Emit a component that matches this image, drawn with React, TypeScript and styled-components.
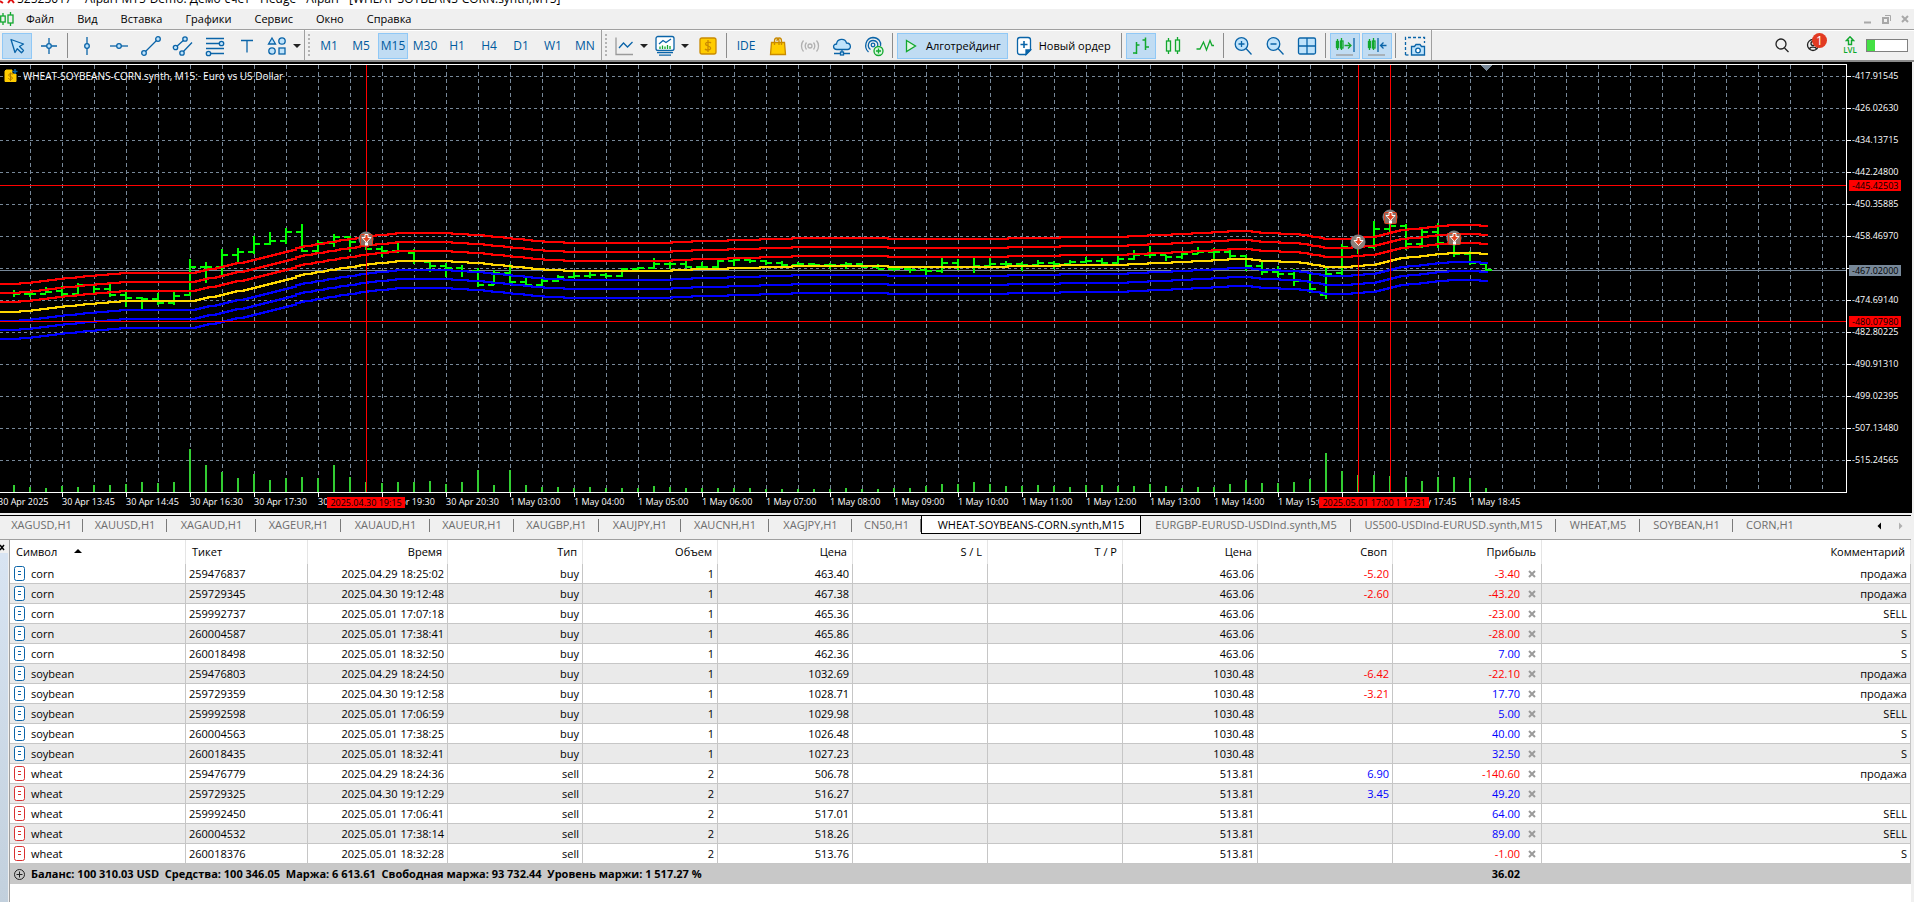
import React from "react";
import styled, { createGlobalStyle, css } from "styled-components";

const UI_FONT = `"Open Sans", "Noto Sans", sans-serif`;

const GlobalStyle = createGlobalStyle`
  * { box-sizing: border-box; }
  html, body { margin: 0; padding: 0; }
  body { background: #fff; color: #000; font: 11px/16px ${UI_FONT}; overflow-x: hidden; }
  button { font: inherit; color: inherit; border: 0; padding: 0; margin: 0; background: none; cursor: default; }
  ul { list-style: none; margin: 0; padding: 0; }
  svg { display: block; flex: none; }
`;

const Window = styled.div`
  min-height: 100vh;
  display: flex;
  flex-direction: column;
  background: #f0f0f0;
`;

/* ---------- title and menu ---------- */

const TitleBar = styled.header`
  height: 9px;
  background: #fff;
  display: flex;
  align-items: flex-end;
  justify-content: space-between;
  overflow: hidden;
`;
const TitleText = styled.div`
  display: flex;
  align-items: flex-end;
  font-size: 12px;
  line-height: 16px;
  white-space: pre;
  padding-bottom: 2px;
`;
const MenuBar = styled.nav`
  height: 20px;
  display: flex;
  align-items: center;
  justify-content: space-between;
  padding-right: 5px;
`;
const MenuList = styled.ul`
  display: flex;
  align-items: center;
  gap: 1px;
`;
const MenuButton = styled.button`
  height: 20px;
  padding: 0 11px;
`;
const MdiButtons = styled.div`
  display: flex;
  gap: 10px;
  color: #a8a8a8;
`;

/* ---------- toolbar ---------- */

const Toolbar = styled.div`
  height: 33px;
  display: flex;
  align-items: stretch;
  justify-content: space-between;
  border-top: 1px solid #a0a0a0;
  border-bottom: 2px solid #8a8a8a;
  box-shadow: inset 0 1px 0 #fff;
`;
const Bands = styled.div`
  display: flex;
`;
const Band = styled.div`
  display: flex;
  align-items: center;
  gap: 2px;
  padding: 1px 1px 0 2px;
  border-right: 1px solid #a0a0a0;
`;
const Grip = styled.span`
  width: 4px;
  height: 24px;
  margin-right: 1px;
  background: radial-gradient(circle at 1px 1px, #b4b4b4 1px, transparent 1px) 1px 0 / 4px 4px repeat-y;
`;
const Divider = styled.span`
  width: 4px;
  height: 25px;
  background: linear-gradient(#8c8c8c, #8c8c8c) 1px 0 / 1px 100% no-repeat;
`;
const ToolButton = styled.button<{ $on?: boolean; $wide?: number }>`
  width: ${(p) => p.$wide ?? 30}px;
  height: 26px;
  display: flex;
  align-items: center;
  justify-content: center;
  color: #005a9e;
  font-size: 12px;
  ${(p) =>
    p.$on &&
    css`
      background: #c0dcf3;
      outline: 1px solid #90c8f6;
      outline-offset: -1px;
    `}
`;
const TextTool = styled(ToolButton)`
  width: auto;
  color: #000;
  gap: 3px;
  padding: 0 7px 0 2px;
  font-size: 11px;
`;
const Caret = styled.span`
  margin: 0 2px 0 4px;
  border: 4px solid transparent;
  border-top: 4px solid #222;
  border-bottom: 0;
`;
const StatusArea = styled.div`
  display: flex;
  align-items: center;
  padding-right: 6px;
`;
const StatusButton = styled.button`
  width: 32px;
  height: 26px;
  display: flex;
  align-items: center;
  justify-content: center;
  position: relative;
`;
const AlertBadge = styled.span`
  position: absolute;
  right: 3px;
  top: 1px;
  width: 15px;
  height: 15px;
  border-radius: 8px;
  background: #e23b22;
  color: #fff;
  font-size: 12px;
  line-height: 15px;
  text-align: center;
`;
const Level = styled.span`
  width: 32px;
  margin-left: 4px;
  display: flex;
  flex-direction: column;
  align-items: center;
  color: #0aa82c;
  font-size: 8px;
  font-weight: 600;
  line-height: 8px;
`;
const Gauge = styled.span`
  width: 42px;
  height: 13px;
  background: #fff;
  border: 1px solid #808080;
  display: flex;
`;
const GaugeFill = styled.span`
  width: 8px;
  background: #44e044;
`;

/* ---------- chart ---------- */

const ChartFrame = styled.section`
  background: #000;
  margin-right: 2px;
  padding-top: 2px;
  display: flex;
  color: #fff;
  font-size: 9px;
  line-height: 12px;
`;
const PlotColumn = styled.div`
  flex: 1;
  min-width: 0;
`;
const Plot = styled.div`
  position: relative;
  height: 429px;
  border: 1px solid #fff;
  border-left: 0;
  overflow: hidden;
`;
const PlotSvg = styled.svg`
  width: 100%;
  height: 427px;
`;
const PlotTitle = styled.div`
  position: absolute;
  left: 4px;
  top: 3px;
  display: flex;
  align-items: center;
  gap: 5px;
  white-space: pre;
  font-size: 10px;
  line-height: 16px;
`;
const TimeAxis = styled.div`
  position: relative;
  height: 20px;
  display: flex;
  overflow: hidden;
`;
const TimeLabel = styled.span`
  flex: none;
  width: 64px;
  height: 18px;
  padding-top: 3px;
  white-space: nowrap;
  background: linear-gradient(#fff, #fff) 0 0 / 1px 4px no-repeat;
  &:first-child { margin-left: -2px; background: none; }
`;
const TimeTag = styled.span<{ $x: number }>`
  position: absolute;
  left: ${(p) => p.$x}px;
  top: 4px;
  width: 78px;
  height: 11px;
  line-height: 11px;
  background: #f00;
  color: #000;
  text-align: center;
  white-space: nowrap;
`;
const PriceAxis = styled.div`
  position: relative;
  width: 65px;
  padding-top: 6px;
`;
const PriceLabel = styled.div`
  height: 32px;
  padding-left: 5px;
  background: linear-gradient(#fff, #fff) 0 6px / 4px 1px no-repeat;
`;
const PriceTag = styled.span<{ $y: number; $color: string }>`
  position: absolute;
  left: 2px;
  top: ${(p) => p.$y}px;
  width: 52px;
  height: 11px;
  padding-left: 3px;
  line-height: 11px;
  background: ${(p) => p.$color};
  color: #000;
`;

/* ---------- chart tabs ---------- */

const TabStrip = styled.div`
  margin-top: 2px;
  height: 25px;
  border-top: 1px solid #000;
  border-bottom: 1px solid #a0a0a0;
  display: flex;
  align-items: flex-start;
  justify-content: space-between;
  padding-right: 8px;
  margin-right: 3px;
`;
const TabList = styled.div`
  display: flex;
`;
const Tab = styled.button<{ $active?: boolean; $w: number }>`
  width: ${(p) => p.$w}px;
  height: 18px;
  color: #6d6d6d;
  white-space: nowrap;
  background: linear-gradient(#7a7a7a, #7a7a7a) 100% 3px / 1px 13px no-repeat;
  &:last-child { background: none; }
  ${(p) =>
    p.$active &&
    css`
      background: #fff;
      color: #000;
      border: 1px solid #000;
      border-top: 0;
    `}
`;
const TabArrows = styled.div`
  display: flex;
  gap: 16px;
  padding-top: 6px;
`;

/* ---------- trade table ---------- */

const Terminal = styled.section`
  flex: 1;
  display: flex;
  margin-right: 3px;
`;
const SideRail = styled.div`
  width: 9px;
  background: linear-gradient(#d9e5f3, #c2d0dd);
  border-right: 1px solid #f0f0f0;
`;
const CloseRail = styled.button`
  display: block;
  width: 8px;
  height: 13px;
  background: #f0f0f0;
`;
const TableArea = styled.div`
  flex: 1;
  background: #fff;
  border-left: 1px solid #a0a0a0;
`;
const TradeTable = styled.table`
  width: 100%;
  table-layout: fixed;
  border-collapse: separate;
  border-spacing: 0;
`;
const HeadCell = styled.th<{ $left?: boolean }>`
  height: 24px;
  padding: 0 5px 0 6px;
  font-weight: 400;
  text-align: ${(p) => (p.$left ? "left" : "right")};
  border-right: 1px solid #e5e5e5;
  white-space: pre;
`;
const SortMark = styled.span`
  display: inline-block;
  margin-left: 17px;
  vertical-align: 3px;
  border: 4px solid transparent;
  border-bottom: 4px solid #000;
  border-top: 0;
`;
const Row = styled.tr`
  background: #fff;
  &:nth-child(even) { background: #eaeaea; }
`;
const Cell = styled.td<{ $left?: boolean; $tone?: "loss" | "gain" }>`
  height: 20px;
  padding: 0 3px;
  line-height: 16px;
  text-align: ${(p) => (p.$left ? "left" : "right")};
  color: ${(p) => (p.$tone === "loss" ? "#f00" : p.$tone === "gain" ? "#00f" : "#000")};
  border-right: 1px solid #c6c6c6;
  border-bottom: 1px solid #c6c6c6;
  white-space: nowrap;
`;
const SymbolBox = styled.span`
  display: flex;
  align-items: center;
  gap: 6px;
  padding-left: 1px;
`;
const ProfitBox = styled.span`
  display: flex;
  align-items: center;
  justify-content: flex-end;
  gap: 8px;
  padding-right: 2px;
`;
const Summary = styled.td`
  height: 20px;
  background: #c8c8c8;
  font-weight: 700;
  padding: 0 3px;
  white-space: pre;
`;
const SummaryBox = styled.span`
  display: flex;
  align-items: center;
  gap: 6px;
  padding-left: 1px;
`;
const SummaryTotal = styled(Summary)`
  text-align: right;
  padding-right: 22px;
`;

/* ---------- icons ---------- */

const BLUE = "#0a64a8";
const GREEN = "#12a82e";
const SKY = "#bfe3fb";

const Icon = ({ children, size = 24, stroke = BLUE }: { children: React.ReactNode; size?: number; stroke?: string }) => (
  <svg width={size} height={size} viewBox={`0 0 ${size} ${size}`} fill="none" stroke={stroke} strokeWidth="1.3">
    {children}
  </svg>
);

const icons = {
  cursor: (
    <Icon>
      <path d="M6 5.5 L18.5 10 L14.5 12.5 L18.5 16.5 L16.5 18.8 L12.3 14.7 L10 18.5 Z" fill={SKY} strokeLinejoin="round" />
    </Icon>
  ),
  cross: (
    <Icon>
      <path d="M4 12H9.5M14.5 12H20M12 4V9.5M12 14.5V20" />
      <circle cx="12" cy="12" r="2.3" fill={SKY} />
    </Icon>
  ),
  vline: (
    <Icon>
      <path d="M12 3V21" />
      <circle cx="12" cy="12" r="2.3" fill={SKY} />
    </Icon>
  ),
  hline: (
    <Icon>
      <path d="M3 12H21" />
      <circle cx="12" cy="12" r="2.3" fill={SKY} />
    </Icon>
  ),
  trend: (
    <Icon>
      <path d="M5 19L19 5" />
      <circle cx="5" cy="19" r="2.3" fill={SKY} />
      <circle cx="19" cy="5" r="2.3" fill={SKY} />
    </Icon>
  ),
  channel: (
    <Icon>
      <path d="M4.5 13.5L14 5M11 19L21 8.5" />
      <circle cx="4.5" cy="13.5" r="2.2" fill={SKY} />
      <circle cx="14" cy="5" r="2.2" fill={SKY} />
      <circle cx="11" cy="19" r="2.2" fill={SKY} />
    </Icon>
  ),
  fibo: (
    <Icon>
      <path d="M3 4.5H21M3 9.5H21M3 14.5H21M3 19.5H21" />
      <circle cx="18.5" cy="9.5" r="2.2" fill={SKY} />
      <circle cx="5.5" cy="19.5" r="2.2" fill={SKY} />
    </Icon>
  ),
  text: (
    <Icon>
      <path d="M6 6.5H18M12 6.5V18.5" />
    </Icon>
  ),
  shapes: (
    <Icon>
      <path d="M7 4L10.5 10H3.5Z" fill={SKY} />
      <circle cx="17" cy="7" r="3.2" fill={SKY} />
      <circle cx="7" cy="17" r="3.2" fill={SKY} />
      <rect x="14" y="14" width="6" height="6" fill={SKY} />
    </Icon>
  ),
  lineType: (
    <Icon>
      <path d="M4 3.5V20.5H21" stroke="#9a9a9a" />
      <path d="M7 14L11.5 9L15.5 13L20.5 8" />
    </Icon>
  ),
  indicators: (
    <Icon>
      <rect x="3" y="2.5" width="18" height="14" rx="2" fill="#fff" />
      <path d="M6 10L10 6.5L13 8.5L18 5" />
      <path d="M7 15V12.5M9.5 15V11.5M12 15V12.5M14.5 15V11M17 15V12" stroke={GREEN} />
      <path d="M4 18.7H20M6 21.2H18" />
    </Icon>
  ),
  dollar: (
    <Icon stroke="#c98a00">
      <rect x="4" y="4" width="16" height="16" rx="2" fill="#ffcc00" />
      <path d="M15 9C14 7.8 10 7.5 9.5 9.8C9.3 12.5 14.8 11.5 14.7 14.2C14.3 16.6 10 16.3 9 15M12 6V18" />
    </Icon>
  ),
  bag: (
    <Icon stroke="#c98a00">
      <path d="M5.5 8.5H18.5L19.5 20.5H4.5Z" fill="#ffcc00" />
      <path d="M8.5 11V7C8.5 3 13 3 13 7V11M11 7C11 3 15.5 3 15.5 7V11" />
    </Icon>
  ),
  signal: (
    <Icon stroke="#b0b0b0">
      <circle cx="12" cy="12" r="2" />
      <path d="M8.5 8.5C7 10.5 7 13.5 8.5 15.5M15.5 8.5C17 10.5 17 13.5 15.5 15.5M5.5 6.5C2.8 9.5 2.8 14.5 5.5 17.5M18.5 6.5C21.2 9.5 21.2 14.5 18.5 17.5" />
    </Icon>
  ),
  cloud: (
    <Icon>
      <path d="M7 15.5C2.5 15.5 2.5 10 6.5 10C7 4.5 15 3.5 16.5 9C21.5 9 21.5 15.5 17.5 15.5Z" fill={SKY} />
      <path d="M12 15.5V19M4 19.5H20" />
      <rect x="10.5" y="18" width="3" height="3" fill={SKY} />
    </Icon>
  ),
  podcast: (
    <Icon>
      <circle cx="11" cy="11" r="1.8" />
      <path d="M8.5 15.5C4.5 12.5 6.5 6.5 11 6.5C15 6.5 16.5 9.5 15.5 12M6.5 18C1.5 13.5 3.5 4 11 3.5C16.5 3.5 19.5 8 18.5 12" />
      <circle cx="16.5" cy="17" r="4.5" fill="#d6f5dc" stroke={GREEN} />
      <path d="M16.5 14.5V19.5M14 17H19" stroke={GREEN} />
    </Icon>
  ),
  play: (
    <Icon stroke={GREEN}>
      <path d="M7.5 6.5L16.5 12L7.5 17.5Z" fill="#dff6e4" />
    </Icon>
  ),
  order: (
    <Icon>
      <path d="M8 3.5H16C17.5 3.5 18.5 4.5 18.5 6V16L14 20.5H8C6.5 20.5 5.5 19.5 5.5 18V6C5.5 4.5 6.5 3.5 8 3.5Z" fill="#fff" />
      <path d="M18.5 16L14 20.5V16Z" fill={BLUE} />
      <path d="M12 7V14M8.5 10.5H15.5" strokeWidth="1.6" />
    </Icon>
  ),
  bars: (
    <Icon stroke={GREEN}>
      <path d="M7.5 8V20M4 19H7.5M7.5 11H10.5M16.5 3.5V16M13.5 6H16.5M16.5 13H20" strokeWidth="1.5" />
    </Icon>
  ),
  candles: (
    <Icon stroke={GREEN}>
      <path d="M7.5 4V20M16.5 3V20" />
      <rect x="5.5" y="7" width="4" height="10" fill="#dff6e4" />
      <rect x="14.5" y="6" width="4" height="11" fill="#dff6e4" />
    </Icon>
  ),
  wave: (
    <Icon stroke={GREEN}>
      <path d="M3.5 15L7 15L10.5 8L13.5 16L17 6.5L19 11.5H21" />
    </Icon>
  ),
  zoomIn: (
    <Icon>
      <circle cx="10.5" cy="10" r="6.3" fill={SKY} />
      <path d="M15 14.5L20.5 20.5M10.5 7V13M7.5 10H13.5" />
    </Icon>
  ),
  zoomOut: (
    <Icon>
      <circle cx="10.5" cy="10" r="6.3" fill={SKY} />
      <path d="M15 14.5L20.5 20.5M7.5 10H13.5" />
    </Icon>
  ),
  tile: (
    <Icon>
      <rect x="3.5" y="4" width="17" height="16" rx="1.5" fill={SKY} />
      <path d="M12 4V20M3.5 12H20.5" />
    </Icon>
  ),
  shiftEnd: (
    <Icon stroke={GREEN}>
      <path d="M4.5 5V16M8.5 4V16M11.5 11.5H18M15 8.5L18 11.5L15 14.5" />
      <rect x="3.5" y="7.5" width="2" height="6" />
      <rect x="7.5" y="7" width="2.5" height="7" />
      <path d="M21 4V18" stroke={BLUE} />
      <path d="M3 21H20" stroke="#9a9a9a" />
    </Icon>
  ),
  shiftLeft: (
    <Icon stroke={GREEN}>
      <path d="M4.5 5V16M8.5 4V16" />
      <rect x="3.5" y="7.5" width="2" height="6" />
      <rect x="7.5" y="7" width="2.5" height="7" />
      <path d="M13 4V18M15.5 11.5H21.5M18.5 8.5L15.5 11.5L18.5 14.5" stroke={BLUE} />
      <path d="M3 21H20" stroke="#9a9a9a" />
    </Icon>
  ),
  camera: (
    <Icon>
      <path d="M2.5 21V3.5H21.5V9" strokeDasharray="3 2" />
      <path d="M2.5 21H7" strokeDasharray="3 2" />
      <path d="M8.5 12.5H11.5L13 10.5H17L18.5 12.5H21.5V21H8.5Z" fill={SKY} />
      <circle cx="15" cy="16.5" r="2.3" fill="#fff" />
    </Icon>
  ),
  search: (
    <Icon size={18} stroke="#222">
      <circle cx="8" cy="8" r="5" />
      <path d="M11.5 12L15.5 16" />
    </Icon>
  ),
  person: (
    <Icon size={18} stroke="#222">
      <circle cx="8" cy="9" r="5.5" />
      <circle cx="8" cy="7.5" r="2" />
      <path d="M4.5 13C5 10.5 11 10.5 11.5 13" />
    </Icon>
  ),
};

const LevelArrow = () => (
  <svg width="10" height="10" viewBox="0 0 10 10" fill="none" stroke={GREEN} strokeWidth="1.4">
    <path d="M5 0.8L8.5 4.5H6.5V8.5H3.5V4.5H1.5Z" />
  </svg>
);

const Combo = ({ icon, label }: { icon: React.ReactNode; label: string }) => (
  <ToolButton $wide={39} aria-label={label}>
    {icon}
    <Caret />
  </ToolButton>
);

/* ---------- chart data ---------- */

const BAR_STEP = 16;
const FIRST_BAR = 14;

// high, low, open and close of every bar, measured down from the top of the price pane in thirds of a pixel
const OHLC = `270 290 279 282|275 290 282 282|262 280 282 275|258 290 273 282|249 285 282 255|252 281 256 267|252 290 267 285|270 321 285 294|290 327 294 296|280 315 297 309|275 314 309 288|177 288 285 201|186 248 201 201|147 228 201 165|144 190 165 156|108 163 156 132|96 136 132 123|84 131 123 96|72 156 96 153|120 160 153 129|102 140 129 111|108 155 111 126|120 150 126 147|138 171 147 153|126 158 153 153|147 192 158 183|183 215 186 198|189 231 198 204|195 231 204 213|205 261 213 255|210 255 255 219|192 250 219 246|234 261 246 255|238 260 255 243|225 245 243 231|213 234 231 228|214 234 228 225|218 234 225 228|204 231 228 207|201 213 207 204|174 207 204 192|180 207 192 192|183 205 192 201|186 207 201 201|180 205 201 183|171 198 183 180|172 189 180 183|180 195 183 189|183 200 189 195|186 200 195 192|189 199 192 195|189 207 195 195|186 207 195 192|190 203 192 201|192 208 201 207|201 213 207 207|204 219 207 210|198 225 210 213|168 219 213 189|176 210 189 200|172 219 200 198|174 205 198 192|183 198 192 192|186 213 192 195|180 196 195 189|183 207 189 192|180 196 192 186|171 190 186 183|174 195 183 189|162 190 189 177|150 180 177 165|138 174 165 165|165 183 165 171|156 178 171 162|141 163 162 156|144 177 156 156|147 177 156 168|165 213 168 198|183 225 198 216|198 230 216 222|207 258 222 242|222 278 242 266|202 296 285 222|132 225 219 141|136 161 141 141|63 148 141 87|70 95 87 78|72 151 78 132|84 144 132 96|69 145 96 129|110 171 129 162|153 195 162 189|190 212 192 210`
  .split("|")
  .map((bar) => bar.split(" ").map((v) => Math.round(Number(v) / 3) + 135));

const VOLUMES = [
  7, 5, 4, 6, 5, 7, 7, 8, 10, 9, 10, 43, 27, 20, 14, 18, 12, 14, 15, 14, 27, 15, 10, 9, 10, 10, 11, 8, 10, 22, 7, 22, 7, 5, 5, 4, 5, 4, 4, 4,
  6, 5, 4, 4, 4, 4, 4, 3, 3, 3, 3, 3, 4, 3, 3, 4, 4, 6, 8, 8, 10, 8, 6, 6, 7, 6, 5, 7, 7, 6, 6, 8, 6, 4, 5, 5, 8, 12, 9,
  9, 10, 13, 39, 21, 17, 17, 16, 15, 11, 15, 15, 14, 4,
];

const MEAN: [number, number][] = [
  [0, 247.7], [30, 245.5], [62, 241.5], [94, 238.5], [126, 236], [190, 236], [222, 229.7], [254, 222.3], [286, 214.3],
  [302, 209.7], [318, 207], [351, 201.7], [366, 199.3], [398, 196.3], [414, 196], [446, 196.3], [478, 198.3], [510, 201.3],
  [542, 204.7], [574, 206], [606, 206.5], [640, 206.3], [669, 205.5], [702, 204], [734, 203.3], [766, 202.3], [798, 201.3],
  [862, 201], [909, 202], [991, 202], [1022, 201], [1070, 200.3], [1118, 200], [1150, 198.3], [1182, 197], [1214, 195.3],
  [1232, 194], [1246, 194], [1262, 196], [1278, 196.5], [1294, 197], [1310, 199.3], [1326, 202], [1342, 202], [1356, 201],
  [1374, 199.7], [1390, 195.3], [1406, 192.3], [1422, 191.3], [1438, 189], [1456, 188], [1470, 188], [1487, 189],
];

const BANDS: { offset: number; color: string }[] = [
  { offset: -28, color: "#f00" },
  { offset: -19, color: "#f00" },
  { offset: -10, color: "#f00" },
  { offset: 9, color: "#00f" },
  { offset: 18, color: "#00f" },
  { offset: 27, color: "#00f" },
  { offset: 0, color: "#ffd700" },
];

const meanAt = (x: number) => {
  const next = Math.max(1, MEAN.findIndex(([px]) => px >= x));
  const [x0, y0] = MEAN[next - 1];
  const [x1, y1] = MEAN[next];
  return Math.round(y0 + ((y1 - y0) * (x - x0)) / (x1 - x0));
};

// a staircase of short level runs, the way an unsmoothed line is drawn
const bandPath = (offset: number) => {
  let d = `M0 ${meanAt(0) + offset}`;
  for (let x = 4; x < 1487; x += 4) d += `V${meanAt(x) + offset}H${x + 4}`;
  return d;
};

const MARKERS = [
  { x: 366, y: 174, boxed: true },
  { x: 1358, y: 177, boxed: false },
  { x: 1390, y: 152, boxed: true },
  { x: 1454, y: 173, boxed: true },
];

const Marker = ({ x, y, boxed }: { x: number; y: number; boxed: boolean }) => (
  <g transform={`translate(${x} ${y})`} shapeRendering="auto">
    <circle r="7" fill="#8c8078" stroke="#808890" />
    {boxed && <rect x="-5.5" y="-4.5" width="12" height="11" rx="1" fill="#8c7068" stroke="#e2421e" />}
    <path d="M-1 -4.5H2V-1.5H5L0.5 3.5L-4 -1.5H-1Z" fill="#e2421e" stroke="#fff" />
    {boxed && <rect x="-1" y="3.5" width="3" height="3" fill="#fff" />}
  </g>
);

const ChartPlot = () => (
  <PlotSvg shapeRendering="crispEdges" role="img" aria-label="WHEAT-SOYBEANS-CORN.synth, M15">
    <g stroke="#778899">
      {Array.from({ length: 100 }, (_, i) => (
        <line key={i} x1={30.5 + i * 32} x2={30.5 + i * 32} y1="0" y2="427" strokeDasharray="4 3" />
      ))}
      {Array.from({ length: 13 }, (_, i) => (
        <line key={i} x1="0" x2="100%" y1={11.5 + i * 32} y2={11.5 + i * 32} strokeDasharray="3 3" />
      ))}
      <line x1="0" x2="100%" y1="205.5" y2="205.5" />
    </g>
    <g fill="#32cd32">
      {VOLUMES.map((v, i) => (
        <rect key={i} x={FIRST_BAR - 1 + i * BAR_STEP} y={427 - v} width="2" height={v} />
      ))}
    </g>
    <g fill="#0f0">
      {OHLC.map(([high, low, open, close], i) => {
        const x = FIRST_BAR + i * BAR_STEP;
        return (
          <g key={i}>
            <rect x={x - 1} y={high} width="2" height={low - high} />
            <rect x={x - 6} y={open - 1} width="6" height="2" />
            <rect x={x} y={close - 1} width="6" height="2" />
          </g>
        );
      })}
    </g>
    {BANDS.map((band) => (
      <path key={band.offset} fill="none" stroke={band.color} strokeWidth="2" d={bandPath(band.offset)} />
    ))}
    <g stroke="#f00">
      <line x1="0" x2="100%" y1="120.5" y2="120.5" />
      <line x1="0" x2="100%" y1="256.5" y2="256.5" />
      <line x1="366.5" x2="366.5" y1="0" y2="427" />
      <line x1="1358.5" x2="1358.5" y1="0" y2="427" />
      <line x1="1390.5" x2="1390.5" y1="0" y2="427" />
    </g>
    {MARKERS.map((m) => (
      <Marker key={m.x} {...m} />
    ))}
    <path d="M1481 0H1492L1486.5 6Z" fill="#778899" />
  </PlotSvg>
);

const TIME_LABELS = [
  "30 Apr 2025", "30 Apr 13:45", "30 Apr 14:45", "30 Apr 16:30", "30 Apr 17:30", "30 Apr 18:30", "30 Apr 19:30", "30 Apr 20:30",
  "1 May 03:00", "1 May 04:00", "1 May 05:00", "1 May 06:00", "1 May 07:00", "1 May 08:00", "1 May 09:00", "1 May 10:00",
  "1 May 11:00", "1 May 12:00", "1 May 13:00", "1 May 14:00", "1 May 15:00", "1 May 16:45", "1 May 17:45", "1 May 18:45",
];

const PRICES = [
  "-417.91545", "-426.02630", "-434.13715", "-442.24800", "-450.35885", "-458.46970", "", "-474.69140", "-482.80225",
  "-490.91310", "-499.02395", "-507.13480", "-515.24565",
];

/* ---------- tabs and table data ---------- */

const TABS: [string, number][] = [
  ["XAGUSD,H1", 83], ["XAUUSD,H1", 84], ["XAGAUD,H1", 89], ["XAGEUR,H1", 85], ["XAUAUD,H1", 89], ["XAUEUR,H1", 84],
  ["XAUGBP,H1", 85], ["XAUJPY,H1", 82], ["XAUCNH,H1", 88], ["XAGJPY,H1", 83], ["CN50,H1", 69],
  ["WHEAT-SOYBEANS-CORN.synth,M15", 220], ["EURGBP-EURUSD-USDInd.synth,M5", 210], ["US500-USDInd-EURUSD.synth,M15", 205],
  ["WHEAT,M5", 84], ["SOYBEAN,H1", 93], ["CORN,H1", 74],
];
const ACTIVE_TAB = "WHEAT-SOYBEANS-CORN.synth,M15";

const COLUMNS: [string, number | undefined][] = [
  ["Символ", 176], ["Тикет", 122], ["Время", 140], ["Тип", 135], ["Объем", 135], ["Цена", 135], ["S / L", 135], ["T / P", 135],
  ["Цена", 135], ["Своп", 135], ["Прибыль", 149], ["Комментарий", undefined],
];

type Trade = [string, string, string, string, string, string, string];
const TRADES: Trade[] = [
  ["corn", "259476837", "2025.04.29 18:25:02", "463.40", "-5.20", "-3.40", "продажа"],
  ["corn", "259729345", "2025.04.30 19:12:48", "467.38", "-2.60", "-43.20", "продажа"],
  ["corn", "259992737", "2025.05.01 17:07:18", "465.36", "", "-23.00", "SELL"],
  ["corn", "260004587", "2025.05.01 17:38:41", "465.86", "", "-28.00", "S"],
  ["corn", "260018498", "2025.05.01 18:32:50", "462.36", "", "7.00", "S"],
  ["soybean", "259476803", "2025.04.29 18:24:50", "1032.69", "-6.42", "-22.10", "продажа"],
  ["soybean", "259729359", "2025.04.30 19:12:58", "1028.71", "-3.21", "17.70", "продажа"],
  ["soybean", "259992598", "2025.05.01 17:06:59", "1029.98", "", "5.00", "SELL"],
  ["soybean", "260004563", "2025.05.01 17:38:25", "1026.48", "", "40.00", "S"],
  ["soybean", "260018435", "2025.05.01 18:32:41", "1027.23", "", "32.50", "S"],
  ["wheat", "259476779", "2025.04.29 18:24:36", "506.78", "6.90", "-140.60", "продажа"],
  ["wheat", "259729325", "2025.04.30 19:12:29", "516.27", "3.45", "49.20", ""],
  ["wheat", "259992450", "2025.05.01 17:06:41", "517.01", "", "64.00", "SELL"],
  ["wheat", "260004532", "2025.05.01 17:38:14", "518.26", "", "89.00", "SELL"],
  ["wheat", "260018376", "2025.05.01 18:32:28", "513.76", "", "-1.00", "S"],
];
const MARKET: Record<string, string> = { corn: "463.06", soybean: "1030.48", wheat: "513.81" };

const tone = (v: string) => (v === "" ? undefined : v.startsWith("-") ? "loss" : "gain");

const TradeIcon = ({ sell }: { sell: boolean }) => (
  <svg width="11" height="15" viewBox="0 0 11 15" fill="#fff" stroke={sell ? "#d93030" : BLUE}>
    <rect x="0.5" y="0.5" width="10" height="14" rx="2" />
    <path d="M4 5.5H7M4 8.5H7" />
  </svg>
);
const CrossIcon = ({ color = "#9a9a9a" }: { color?: string }) => (
  <svg width="8" height="8" viewBox="0 0 8 8" stroke={color} strokeWidth="2">
    <path d="M1 1L7 7M7 1L1 7" />
  </svg>
);

export default function App() {
  return (
    <Window>
      <GlobalStyle />
      <TitleBar>
        <TitleText>
          <svg width="17" height="9" viewBox="0 0 17 9" fill="none" stroke="#e01010" strokeWidth="2">
            <path d="M0 3L3 5M8 5L11 1L14 5" />
          </svg>
          {"52523017  - Alpari-MT5-Demo: Демо-счет - Hedge - Alpari - [WHEAT-SOYBEANS-CORN.synth,M15]"}
        </TitleText>
      </TitleBar>
      <MenuBar>
        <MenuList>
          <li>
            <svg width="14" height="16" viewBox="0 0 14 16" fill="none" stroke={GREEN} strokeWidth="1.3">
              <path d="M3 2V5M3 11V14M10.5 1V4M10.5 12V15" />
              <rect x="0.7" y="5" width="4.5" height="6" />
              <rect x="8" y="4" width="5" height="8" />
            </svg>
          </li>
          {["Файл", "Вид", "Вставка", "Графики", "Сервис", "Окно", "Справка"].map((m) => (
            <li key={m}>
              <MenuButton>{m}</MenuButton>
            </li>
          ))}
        </MenuList>
        <MdiButtons>
          <button aria-label="Свернуть">
            <svg width="9" height="9" viewBox="0 0 9 9" stroke="currentColor" strokeWidth="2"><path d="M1 7.5H8" /></svg>
          </button>
          <button aria-label="Восстановить">
            <svg width="9" height="9" viewBox="0 0 9 9" fill="none" stroke="currentColor"><rect x="1" y="3" width="5" height="5" strokeWidth="2" /><path d="M3 0.5H8.5V6" /></svg>
          </button>
          <button aria-label="Закрыть"><CrossIcon color="#a8a8a8" /></button>
        </MdiButtons>
      </MenuBar>

      <Toolbar>
        <Bands>
          <Band>
            <ToolButton $on aria-label="Курсор">{icons.cursor}</ToolButton>
            <ToolButton aria-label="Перекрестие">{icons.cross}</ToolButton>
            <Divider />
            <ToolButton aria-label="Вертикальная линия">{icons.vline}</ToolButton>
            <ToolButton aria-label="Горизонтальная линия">{icons.hline}</ToolButton>
            <ToolButton aria-label="Трендовая линия">{icons.trend}</ToolButton>
            <ToolButton aria-label="Канал">{icons.channel}</ToolButton>
            <ToolButton aria-label="Фибоначчи">{icons.fibo}</ToolButton>
            <ToolButton aria-label="Текст">{icons.text}</ToolButton>
            <Combo icon={icons.shapes} label="Объекты" />
          </Band>
          <Band>
            <Grip />
            {["M1", "M5", "M15", "M30", "H1", "H4", "D1", "W1", "MN"].map((t) => (
              <ToolButton key={t} $on={t === "M15"}>{t}</ToolButton>
            ))}
          </Band>
          <Band>
            <Grip />
            <Combo icon={icons.lineType} label="Тип линии" />
            <Combo icon={icons.indicators} label="Индикаторы" />
            <ToolButton aria-label="Символы">{icons.dollar}</ToolButton>
            <Divider />
            <ToolButton>IDE</ToolButton>
            <ToolButton aria-label="Маркет">{icons.bag}</ToolButton>
            <ToolButton aria-label="Сигналы">{icons.signal}</ToolButton>
            <ToolButton aria-label="Облако">{icons.cloud}</ToolButton>
            <ToolButton aria-label="Хостинг">{icons.podcast}</ToolButton>
            <Divider />
            <TextTool $on>{icons.play}Алготрейдинг</TextTool>
            <TextTool>{icons.order}Новый ордер</TextTool>
            <Divider />
            <ToolButton $on aria-label="Бары">{icons.bars}</ToolButton>
            <ToolButton aria-label="Свечи">{icons.candles}</ToolButton>
            <ToolButton aria-label="Линия">{icons.wave}</ToolButton>
            <Divider />
            <ToolButton aria-label="Увеличить">{icons.zoomIn}</ToolButton>
            <ToolButton aria-label="Уменьшить">{icons.zoomOut}</ToolButton>
            <ToolButton aria-label="Плитка">{icons.tile}</ToolButton>
            <Divider />
            <ToolButton $on aria-label="Автопрокрутка">{icons.shiftEnd}</ToolButton>
            <ToolButton $on aria-label="Сдвиг графика">{icons.shiftLeft}</ToolButton>
            <Divider />
            <ToolButton aria-label="Снимок экрана">{icons.camera}</ToolButton>
          </Band>
        </Bands>
        <StatusArea>
          <StatusButton aria-label="Поиск">{icons.search}</StatusButton>
          <StatusButton aria-label="Уведомления">
            {icons.person}
            <AlertBadge>1</AlertBadge>
          </StatusButton>
          <Level>
            <LevelArrow />
            LVL
          </Level>
          <Gauge><GaugeFill /></Gauge>
        </StatusArea>
      </Toolbar>

      <ChartFrame>
        <PlotColumn>
          <Plot>
            <ChartPlot />
            <PlotTitle>
              <svg width="14" height="14" viewBox="0 0 14 14" fill="none">
                <path d="M2 1H8V5H12V12.5H1V2Z" fill="#ffcc00" stroke="#ffcc00" />
                <path d="M8.5 5.5C7.5 4 4.5 4.5 4.7 6.2C4.8 8 8.5 7.2 8.5 9.2C8.2 11 5 10.8 4.3 9.3M6.5 3.5V12" stroke="#b07a00" />
                <path d="M11 0V5M8.5 2.5H13.5" stroke={BLUE} strokeWidth="1.5" />
              </svg>
              {"WHEAT-SOYBEANS-CORN.synth, M15:  Euro vs US Dollar"}
            </PlotTitle>
          </Plot>
          <TimeAxis>
            {TIME_LABELS.map((t) => (
              <TimeLabel key={t}>{t}</TimeLabel>
            ))}
            <TimeTag $x={327}>2025.04.30 19:15</TimeTag>
            <TimeTag $x={1351}>2025.05.01 17:31</TimeTag>
            <TimeTag $x={1319}>2025.05.01 17:00</TimeTag>
          </TimeAxis>
        </PlotColumn>
        <PriceAxis>
          {PRICES.map((p, i) => (
            <PriceLabel key={i}>{p}</PriceLabel>
          ))}
          <PriceTag $y={116} $color="#f00">-445.42503</PriceTag>
          <PriceTag $y={201} $color="#778899">-467.02000</PriceTag>
          <PriceTag $y={252} $color="#f00">-480.07980</PriceTag>
        </PriceAxis>
      </ChartFrame>

      <TabStrip>
        <TabList>
          {TABS.map(([name, w]) => (
            <Tab key={name} $w={w} $active={name === ACTIVE_TAB}>{name}</Tab>
          ))}
        </TabList>
        <TabArrows>
          <button aria-label="Назад">
            <svg width="5" height="8" viewBox="0 0 5 8" fill="#000"><path d="M4 0.5V7.5L0.5 4Z" /></svg>
          </button>
          <button aria-label="Вперёд">
            <svg width="5" height="8" viewBox="0 0 5 8" fill="#b0b0b0"><path d="M1 0.5V7.5L4.5 4Z" /></svg>
          </button>
        </TabArrows>
      </TabStrip>

      <Terminal>
        <SideRail>
          <CloseRail aria-label="Закрыть">
            <svg width="6" height="8" viewBox="0 0 6 8" stroke="#000" strokeWidth="1.5"><path d="M0 2L4 7M4 2L0 7" /></svg>
          </CloseRail>
        </SideRail>
        <TableArea>
          <TradeTable>
            <colgroup>
              {COLUMNS.map(([, w], i) => (
                <col key={i} width={w} />
              ))}
            </colgroup>
            <thead>
              <tr>
                {COLUMNS.map(([name], i) => (
                  <HeadCell key={i} scope="col" $left={i < 2}>
                    {name}
                    {i === 0 && <SortMark />}
                  </HeadCell>
                ))}
              </tr>
            </thead>
            <tbody>
              {TRADES.map(([symbol, ticket, time, price, swap, profit, comment]) => (
                <Row key={ticket}>
                  <Cell $left>
                    <SymbolBox>
                      <TradeIcon sell={symbol === "wheat"} />
                      {symbol}
                    </SymbolBox>
                  </Cell>
                  <Cell $left>{ticket}</Cell>
                  <Cell>{time}</Cell>
                  <Cell>{symbol === "wheat" ? "sell" : "buy"}</Cell>
                  <Cell>{symbol === "wheat" ? "2" : "1"}</Cell>
                  <Cell>{price}</Cell>
                  <Cell />
                  <Cell />
                  <Cell>{MARKET[symbol]}</Cell>
                  <Cell $tone={tone(swap)}>{swap}</Cell>
                  <Cell $tone={tone(profit)}>
                    <ProfitBox>
                      {profit}
                      <button aria-label={`Закрыть ${ticket}`}><CrossIcon /></button>
                    </ProfitBox>
                  </Cell>
                  <Cell>{comment}</Cell>
                </Row>
              ))}
            </tbody>
            <tfoot>
              <tr>
                <Summary colSpan={10}>
                  <SummaryBox>
                    <svg width="11" height="11" viewBox="0 0 11 11" fill="none" stroke="#222">
                      <circle cx="5.5" cy="5.5" r="5" />
                      <path d="M5.5 2.5V8.5M2.5 5.5H8.5" />
                    </svg>
                    {"Баланс: 100 310.03 USD  Средства: 100 346.05  Маржа: 6 613.61  Свободная маржа: 93 732.44  Уровень маржи: 1 517.27 %"}
                  </SummaryBox>
                </Summary>
                <SummaryTotal>36.02</SummaryTotal>
                <Summary />
              </tr>
            </tfoot>
          </TradeTable>
        </TableArea>
      </Terminal>
    </Window>
  );
}
